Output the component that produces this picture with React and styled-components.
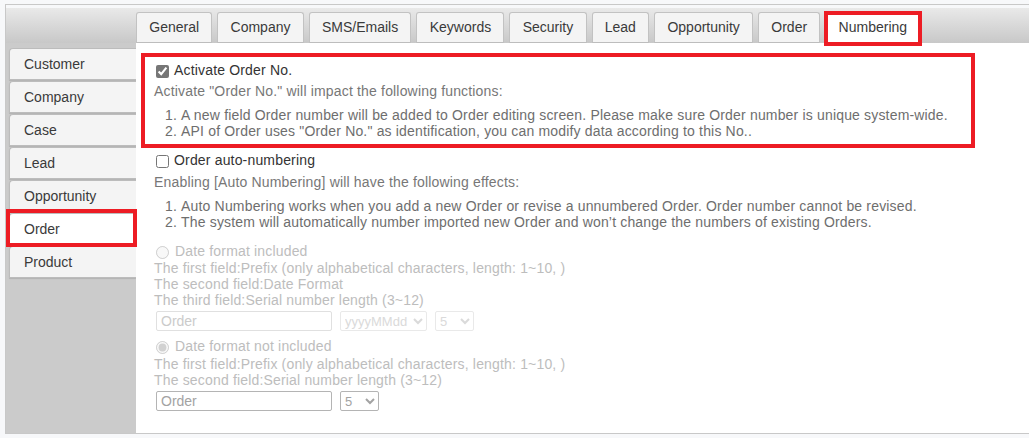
import React from "react"
import styled, { createGlobalStyle, css } from "styled-components"

const GlobalStyle = createGlobalStyle`
  html, body {
    margin: 0;
    padding: 0;
    background: #f7f8fa;
  }
  body {
    font-family: "Liberation Sans", Arial, sans-serif;
    font-size: 14px;
    color: #333;
  }
`

// red annotation frame drawn over a part
const marked = css`
  position: relative;
  &::after {
    content: "";
    position: absolute;
    top: ${(p) => p.$box[0]}px;
    right: ${(p) => p.$box[1]}px;
    bottom: ${(p) => p.$box[2]}px;
    left: ${(p) => p.$box[3]}px;
    border: 4px solid #ed1c24;
    pointer-events: none;
    z-index: 2;
  }
`

const Frame = styled.div`
  margin: 4px 0 0 5px;
  padding-top: 3px;
  border: 1px solid #c8c8c8;
  border-right: none;
  background: #f7f8fa;
`

const TabBar = styled.div`
  display: flex;
  align-items: flex-end;
  gap: 5px;
  height: 35px;
  padding-left: 130px;
  box-sizing: border-box;
  background: linear-gradient(#e9e9e9, #c8c8c8);
`

const Tab = styled.div`
  box-sizing: border-box;
  height: 31px;
  padding: 0 12.25px;
  line-height: 29px;
  border: 1px solid #c2c2c2;
  border-radius: 3px 3px 0 0;
  background: ${(p) => (p.$active ? "#fff" : "#f4f4f4")};
  border-bottom-color: ${(p) => (p.$active ? "#fff" : "#bdbdbd")};
  color: #3a3a3a;
  white-space: nowrap;
  ${(p) => p.$box && marked}
`

const Body = styled.div`
  display: flex;
  height: 390px;
`

const SideNav = styled.div`
  width: 130px;
  flex-shrink: 0;
  box-sizing: border-box;
  padding: 5px 0 0 3px;
  background: #cbcbcb;
`

const SideTab = styled.div`
  box-sizing: border-box;
  height: 32px;
  margin-bottom: 1px;
  padding-left: 14px;
  line-height: 31px;
  border: 1px solid #bcbcbc;
  border-right: none;
  border-radius: 4px 0 0 0;
  background: ${(p) => (p.$active ? "#fff" : "#f4f4f4")};
  box-shadow: 0 1px 1px rgba(0, 0, 0, 0.12);
  color: #3a3a3a;
  ${(p) => p.$box && marked}
`

const Content = styled.div`
  flex: 1;
  background: #fff;
  padding: 19px 0 0 18px;
  letter-spacing: 0.17px;
`

const Section = styled.div`
  width: 817px;
  ${(p) => p.$box && marked}
`

const OptionRow = styled.label`
  display: flex;
  align-items: flex-start;
  line-height: 16px;
  margin-top: ${(p) => p.$top || 0}px;
  color: ${(p) => (p.$muted ? "#bdbdbd" : "#333")};
`

const Check = styled.input`
  width: 13px;
  height: 13px;
  margin: 3px 5px 0 2px;
  accent-color: #767676;
`

const Radio = styled.input`
  width: 13px;
  height: 13px;
  margin: 3px 6px 0 2px;
`

const Note = styled.div`
  line-height: 16px;
  margin-top: ${(p) => p.$top || 0}px;
  color: ${(p) => (p.$muted ? "#bdbdbd" : "#777")};
`

const Steps = styled.ol`
  margin: 8px 0 0;
  padding-left: 11px;
  list-style-position: inside;
  line-height: 16px;
  color: #6e6e6e;
`

const FieldRow = styled.div`
  display: flex;
  gap: 8px;
  margin: 3px 0 0 2px;
  letter-spacing: 0;
`

const TextBox = styled.input`
  box-sizing: border-box;
  width: 176px;
  height: 20px;
  padding: 0 4px;
  font: 14px "Liberation Sans", Arial, sans-serif;
  border: 1px solid ${(p) => (p.disabled ? "#e0e0e0" : "#b4b4b4")};
  border-radius: 2px;
  background: #fff;
  color: ${(p) => (p.disabled ? "#cbcbcb" : "#a3a3a3")};
`

const Picker = styled.select`
  box-sizing: border-box;
  width: ${(p) => p.$w}px;
  height: 20px;
  padding: 0;
  font: 13px "Liberation Sans", Arial, sans-serif;
  border: 1px solid ${(p) => (p.disabled ? "#e0e0e0" : "#b4b4b4")};
  border-radius: 2px;
  background: #fff;
  color: ${(p) => (p.disabled ? "#cbcbcb" : "#a3a3a3")};
`

const tabs = ["General", "Company", "SMS/Emails", "Keywords", "Security", "Lead", "Opportunity", "Order", "Numbering"]
const modules = ["Customer", "Company", "Case", "Lead", "Opportunity", "Order", "Product"]

export default function App() {
  return (
    <>
      <GlobalStyle />
      <Frame>
        <TabBar>
          {tabs.map((t) => (
            <Tab key={t} $active={t === "Numbering"} $box={t === "Numbering" ? [-2, -3, -4, -2] : null}>
              {t}
            </Tab>
          ))}
        </TabBar>
        <Body>
          <SideNav>
            {modules.map((m) => (
              <SideTab key={m} $active={m === "Order"} $box={m === "Order" ? [-5, -1, -3, -4] : null}>
                {m}
              </SideTab>
            ))}
          </SideNav>
          <Content>
            <Section $box={[-9, -4, -9, -13]}>
              <OptionRow>
                <Check type="checkbox" defaultChecked />
                Activate Order No.
              </OptionRow>
              <Note $top={5}>Activate "Order No." will impact the following functions:</Note>
              <Steps>
                <li>A new field Order number will be added to Order editing screen. Please make sure Order number is unique system-wide.</li>
                <li>API of Order uses "Order No." as identification, you can modify data according to this No..</li>
              </Steps>
            </Section>

            <OptionRow $top={13}>
              <Check type="checkbox" />
              Order auto-numbering
            </OptionRow>
            <Note $top={6}>Enabling [Auto Numbering] will have the following effects:</Note>
            <Steps>
              <li>Auto Numbering works when you add a new Order or revise a unnumbered Order. Order number cannot be revised.</li>
              <li>The system will automatically number imported new Order and won’t change the numbers of existing Orders.</li>
            </Steps>

            <OptionRow $top={13} $muted>
              <Radio type="radio" name="fmt" disabled />
              Date format included
            </OptionRow>
            <Note $top={1} $muted>The first field:Prefix (only alphabetical characters, length: 1~10, )</Note>
            <Note $muted>The second field:Date Format</Note>
            <Note $muted>The third field:Serial number length (3~12)</Note>
            <FieldRow>
              <TextBox disabled defaultValue="Order" />
              <Picker $w={87} disabled defaultValue="yyyyMMdd">
                <option>yyyyMMdd</option>
              </Picker>
              <Picker $w={39} disabled defaultValue="5">
                <option>5</option>
              </Picker>
            </FieldRow>

            <OptionRow $top={7} $muted>
              <Radio type="radio" name="fmt" disabled defaultChecked />
              Date format not included
            </OptionRow>
            <Note $top={2} $muted>The first field:Prefix (only alphabetical characters, length: 1~10, )</Note>
            <Note $muted>The second field:Serial number length (3~12)</Note>
            <FieldRow>
              <TextBox defaultValue="Order" readOnly />
              <Picker $w={39} defaultValue="5">
                <option>5</option>
              </Picker>
            </FieldRow>
          </Content>
        </Body>
      </Frame>
    </>
  )
}
